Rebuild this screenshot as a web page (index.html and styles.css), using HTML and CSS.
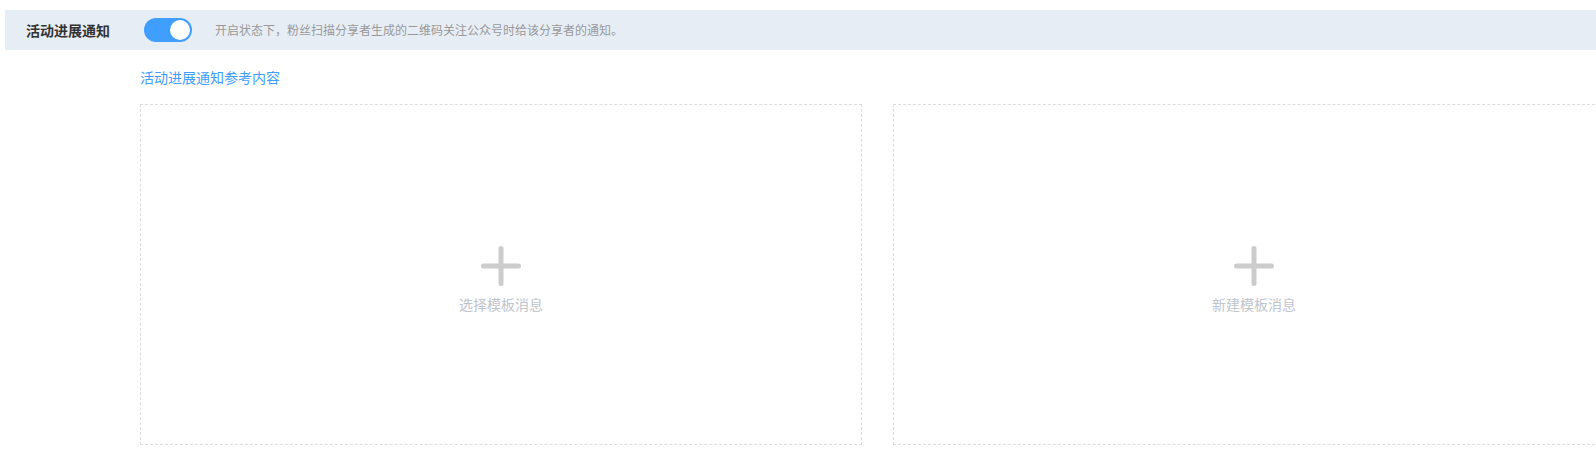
FILE: index.html
```html
<!DOCTYPE html>
<html lang="zh-CN">
<head>
<meta charset="utf-8">
<title>活动进展通知</title>
<link rel="stylesheet" href="styles.css">
</head>
<body>
<div class="page">
  <div class="setting-bar">
    <div class="setting-label">活动进展通知</div>
    <div class="switch is-on"><span class="switch-knob"></span></div>
    <div class="setting-desc">开启状态下，粉丝扫描分享者生成的二维码关注公众号时给该分享者的通知。</div>
  </div>
  <div class="content">
    <a class="ref-link" href="#">活动进展通知参考内容</a>
    <div class="cards">
      <div class="card">
        <svg class="plus" width="40" height="40" viewBox="0 0 40 40"><path d="M20 2.5V37.5M2.5 20H37.5" stroke="#cccccc" stroke-width="5" stroke-linecap="round" fill="none"/></svg>
        <div class="card-text">选择模板消息</div>
      </div>
      <div class="card">
        <svg class="plus" width="40" height="40" viewBox="0 0 40 40"><path d="M20 2.5V37.5M2.5 20H37.5" stroke="#cccccc" stroke-width="5" stroke-linecap="round" fill="none"/></svg>
        <div class="card-text">新建模板消息</div>
      </div>
    </div>
  </div>
</div>
</body>
</html>
```

FILE: styles.css
```css
html, body {
  margin: 0;
  padding: 0;
  background: #ffffff;
}
body {
  font-family: "Noto Sans CJK SC", "Noto Sans", sans-serif;
  color: #333333;
  overflow: hidden;
}
.page {
  padding: 10px 0 0 5px;
  width: 1591px;
  height: 440px;
  overflow: hidden;
}
.setting-bar {
  height: 40px;
  background: #e7edf5;
  display: flex;
  align-items: center;
  padding-left: 21px;
}
.setting-label {
  width: 118px;
  font-size: 14px;
  font-weight: 600;
  color: #333333;
  line-height: 20px;
}
.switch {
  width: 48px;
  height: 24px;
  border-radius: 12px;
  background: #409eff;
  display: flex;
  align-items: center;
  justify-content: flex-end;
  padding: 0 2px;
  box-sizing: border-box;
  flex-shrink: 0;
}
.switch-knob {
  width: 20px;
  height: 20px;
  border-radius: 50%;
  background: #ffffff;
}
.setting-desc {
  margin-left: 23px;
  font-size: 12px;
  color: #999999;
  line-height: 18px;
}
.content {
  padding-left: 135px;
  padding-top: 17px;
}
.ref-link {
  display: block;
  font-size: 14px;
  line-height: 20px;
  color: #409eff;
  text-decoration: none;
}
.cards {
  display: flex;
  gap: 31px;
  margin-top: 17px;
}
.card {
  flex-shrink: 0;
  width: 722px;
  height: 341px;
  box-sizing: border-box;
  border: 1px dashed #dddddd;
  display: flex;
  flex-direction: column;
  align-items: center;
  justify-content: center;
  padding-top: 10px;
}
.plus {
  display: block;
}
.card-text {
  margin-top: 8px;
  font-size: 14px;
  line-height: 20px;
  color: #c0c4cc;
}
```
